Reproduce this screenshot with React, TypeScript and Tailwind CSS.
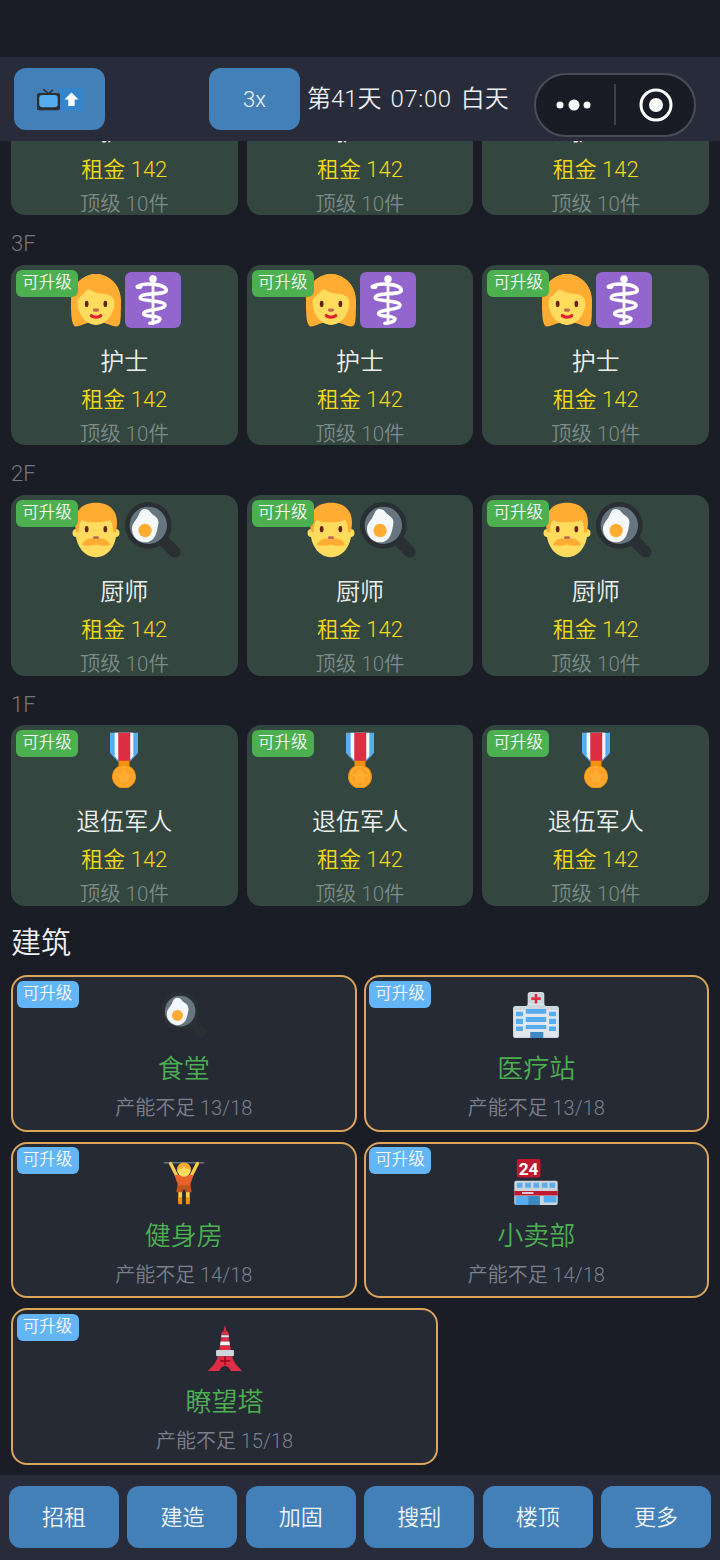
type IconProps = { className?: string };

const Woman = ({ className }: IconProps) => (
  <svg viewBox="0 0 36 36" className={className}>
    <path fill="#FFAC33" d="M18 1.300c6 0 16 4.700 16 17.700s0 16-3 16-7-3-13-3-9.915 3-13 3c-3.343 0-3-12-3-16C2 6 12 1.300 18 1.300z" />
    <path fill="#FFDC5D" d="M6 18.562c0-8.526 5.373-15.438 12-15.438s12 6.912 12 15.438S24.627 34 18 34 6 27.088 6 18.562z" />
    <path fill="#DF1F32" d="M18 30c-2.347 0-3.575-1.160-3.707-1.293-.391-.391-.391-1.023 0-1.414.387-.387 1.013-.39 1.404-.01.051.047.806.717 2.303.717 1.519 0 2.273-.69 2.305-.719.398-.373 1.027-.362 1.406.029.379.393.38 1.011-.006 1.397C21.575 28.840 20.347 30 18 30z" />
    <path fill="#FFAC33" d="M3.064 24c-.03-.325-.064-.647-.064-1 0-5 3 .562 3-3 0-3.563 2-4 4-6l3-3s5 3 9 3 8 2 8 6 3-2 3 3c0 .355-.033.673-.058 1h1.049C34 21.523 34 20.868 34 19 34 6 24 1.300 18 1.300S2 6 2 19c0 1.158-.028 2.986.012 5h1.052z" />
    <ellipse fill="#662113" cx="12" cy="20.500" rx="1.200" ry="2" />
    <ellipse fill="#662113" cx="24" cy="20.500" rx="1.200" ry="2" />
    <path fill="#C1694F" d="M19 25.500h-2c-.55 0-1-.45-1-1s.45-1 1-1h2c.55 0 1 .45 1 1s-.45 1-1 1z" />
  </svg>
);

const Man = ({ className }: IconProps) => (
  <svg viewBox="0 0 36 36" className={className}>
    <circle fill="#FFDC5D" cx="5.500" cy="20" r="2.600" />
    <circle fill="#FFDC5D" cx="30.500" cy="20" r="2.600" />
    <ellipse fill="#FFDC5D" cx="18" cy="20" rx="13" ry="15.500" />
    <path fill="#FFAC33" d="M18 .5C10 .5 4.500 5 4.500 13c0 3 .5 5 .8 6.500H7c0-3 .2-6 2-8 3 2 14 2 18 0 1.800 2 2 5 2 8h1.700c.3-1.500.8-3.500.8-6.500C31.500 5 26 .5 18 .5z" />
    <ellipse fill="#662113" cx="12" cy="17.500" rx="1.200" ry="2" />
    <ellipse fill="#662113" cx="24" cy="17.500" rx="1.200" ry="2" />
    <path fill="#C1694F" d="M19 24h-2c-.55 0-1-.45-1-1s.45-1 1-1h2c.55 0 1 .45 1 1s-.45 1-1 1z" />
    <path fill="#FFAC33" d="M18 24.500c-2-1.500-5-1.300-7 .3-1.300 1-2 2.200-2 2.700 2.500.8 6.500 1 9-.3 2.500 1.300 6.500 1.100 9 .3 0-.5-.7-1.700-2-2.700-2-1.600-5-1.800-7-.3z" />
  </svg>
);

const Caduceus = ({ className }: IconProps) => (
  <svg viewBox="0 0 36 36" className={className}>
    <rect width="36" height="36" rx="4" fill="#9266CC" />
    <path fill="none" stroke="#fff" strokeWidth="1.800" strokeLinecap="round" d="M18 6v27" />
    <circle cx="18" cy="4.500" r="2.400" fill="#fff" />
    <path
      fill="none"
      stroke="#fff"
      strokeWidth="2.300"
      strokeLinecap="round"
      d="M8 9.500C12 6.500 27 7.500 26.500 12 26 15 10 13 9.800 16.500 9.800 19 26 18 25.700 21.500 25.500 24.500 12 24 12 26.700 12 29 22 28 22.500 30 22.500 32 18 33 16 33"
    />
    <ellipse cx="9" cy="9.500" rx="2.200" ry="1.500" fill="#fff" />
  </svg>
);

const Pan = ({ className }: IconProps) => (
  <svg viewBox="0 0 36 36" className={className}>
    <path fill="none" stroke="#292F33" strokeWidth="7.500" strokeLinecap="round" d="M24 24l8 8" />
    <circle cx="15" cy="15" r="15" fill="#292F33" />
    <circle cx="15" cy="15" r="12" fill="#66757F" />
    <path fill="#F5F8FA" d="M12.500 4.500c3.500 0 3.500 2.500 6 4 2.500 1.500 3.500 3.500 2.800 6.500-.5 2.300-.6 4-1.800 6.500-1.300 3-4.500 5-8 4.300-3.800-.7-6.800-4-7-8-.1-3 1.300-4.800 3-7 1.500-2 2-6.300 5-6.300z" />
    <circle cx="12.900" cy="18.300" r="4.300" fill="#FFAC33" />
  </svg>
);

const Medal = ({ className }: IconProps) => (
  <svg viewBox="0 0 36 36" className={className}>
    <path fill="#55ACEE" d="M9 .5h18v13l-5 5.500h-8L9 13.500z" />
    <path fill="#F5F8FA" d="M12 .5h12v15l-3 3.500h-6l-3-3.500z" />
    <path fill="#DD2E44" d="M14.300 .5H22V19h-7.700z" />
    <path fill="#F4900C" d="M14.500 18.500h7v4h-7z" />
    <circle cx="18" cy="28.700" r="7.300" fill="#FFAC33" stroke="#F4900C" strokeWidth="0.800" />
    <circle cx="18" cy="28.700" r="5.800" fill="#F4900C" opacity="0.35" />
    <path fill="#FFAC33" d="M18 23.600l1.600 3.300 3.700.5-2.700 2.500.7 3.600-3.300-1.800-3.300 1.800.7-3.600-2.700-2.500 3.700-.5z" />
  </svg>
);

const Hospital = ({ className }: IconProps) => (
  <svg viewBox="0 0 36 36" className={className}>
    <path fill="#CCD6DD" d="M11.500 2a2 2 0 012-2h9a2 2 0 012 2v12h-13z" />
    <path fill="#E1E8ED" d="M11.500 9h13v5h-13z" />
    <path fill="#DD2E44" d="M17 1.500h2v2.700h2.700v2.100H19V9h-2V6.300h-2.700V4.200H17z" />
    <path fill="#CCD6DD" d="M0 13a2 2 0 012-2h8.500l1-1h13l1 1H34a2 2 0 012 2v21a2 2 0 01-2 2H2a2 2 0 01-2-2z" />
    <path fill="#E1E8ED" d="M1 14h34v21H1z" />
    <path fill="#55ACEE" d="M2.300 15.400h5.500V19H2.300zM28.200 15.400h5.500V19h-5.500zM2.300 21h5.500v4H2.300zM28.200 21h5.500v4h-5.500zM2.300 27h5.500v3.500H2.300zM28.200 27h5.500v3.500h-5.500zM10 13.300h16V17H10zM10 19.600h16v3.900H10zM10 25.900h16V29H10z" />
    <path fill="#3B88C3" d="M13.500 31.300h10.200V36H13.500z" />
  </svg>
);

const Lifter = ({ className }: IconProps) => (
  <svg viewBox="0 0 36 36" className={className}>
    <path fill="#66757F" d="M1 2.400h34v1.200H1z" />
    <path fill="#292F33" d="M1 1h1.500v4H1zM33.500 1H35v4h-1.500z" />
    <path fill="none" stroke="#FFCC4D" strokeWidth="2.600" strokeLinecap="round" d="M7.500 3.500l5 10M28.500 3.500l-5 10" />
    <path fill="none" stroke="#FFCC4D" strokeWidth="3" d="M15 24v9M21 24v9" />
    <path fill="#F4900C" d="M13.500 30h3v5.500h-3zM19.500 30h3v5.500h-3z" />
    <path fill="#E8612C" d="M10.500 12.500h15l-2.500 7v3H13v-3z" />
    <path fill="#C1541C" d="M12.800 20.500h10.400l.8 5.500h-4.500L18 23.500 16.500 26H12z" />
    <circle cx="18" cy="8.500" r="5.400" fill="#FFDC5D" />
    <path fill="#FFAC33" d="M12.600 8.500c0-3.800 2.700-5.600 5.400-5.600s5.400 1.800 5.400 5.600c-1.500 0-4.200-1-5.400-2.400-1 1.500-3.700 2.400-5.400 2.400z" />
  </svg>
);

const Store = ({ className }: IconProps) => (
  <svg viewBox="0 0 36 36" className={className}>
    <rect x="3" y="0" width="18.500" height="14.500" rx="1.500" fill="#BE1931" />
    <text x="12.200" y="12.300" textAnchor="middle" fontSize="13.500" fontWeight="700" fill="#fff" fontFamily="Roboto, sans-serif">24</text>
    <rect x="1" y="17" width="34" height="19" rx="1.500" fill="#CCD6DD" />
    <path fill="#5DADEC" d="M3 18.500h4.500v4H3zM9.500 18.500H14v4H9.500zM16 18.500h4.500v4H16zM22.500 18.500H27v4h-4.500zM28.500 18.500H33v4h-4.500z" />
    <path fill="#BE1931" d="M1 25h34v3.500H1z" />
    <path fill="#F5F8FA" d="M7 26h9v1.200H7z" />
    <path fill="#55ACEE" d="M2 29h19v7H2z" />
    <path fill="#3B88C3" d="M12 29h9v7h-9z" />
    <path fill="#55ACEE" d="M24 29h10v5H24z" />
  </svg>
);

const Tower = ({ className }: IconProps) => (
  <svg viewBox="0 0 36 36" className={className}>
    <path fill="#DD2E44" d="M18 0l1.200 5h-2.400z" />
    <path fill="#DD2E44" d="M15.500 5h5l.5 3h-6z" />
    <path fill="#E1E8ED" d="M15 8h6v1.800h-6z" />
    <path fill="#DD2E44" d="M15 9.800h6l.5 3.200h-7z" />
    <path fill="#F5F8FA" d="M14.500 13h7l.4 3h-7.800z" />
    <path fill="#DD2E44" d="M14 16h8l.5 4h-9z" />
    <rect x="11" y="19.500" width="14" height="5" rx="1" fill="#CCD6DD" />
    <path fill="#DD2E44" d="M12.500 24.500h11c1 3.500 3 7 7 10.500l1 1h-9c-1-2.500-2.500-4-4.500-4s-3.500 1.500-4.500 4h-9l1-1c4-3.500 6-7 7-10.500z" />
    <path fill="#A0041E" d="M14 27.500h8v1.200h-8z" />
    <path fill="#A0041E" d="M17.400 24.500h1.200v7h-1.200z" />
  </svg>
);

const Tv = ({ className }: IconProps) => (
  <svg viewBox="0 0 36 36" className={className}>
    <path fill="none" stroke="#292F33" strokeWidth="2.500" d="M18 9L10 2M18 9l7-6" />
    <rect x="0" y="8" width="36" height="27" rx="3" fill="#292F33" />
    <rect x="3.500" y="11" width="29" height="19" rx="5" fill="#55ACEE" />
  </svg>
);

const UpArrow = ({ className }: IconProps) => (
  <svg viewBox="0 0 36 36" className={className}>
    <rect width="36" height="36" fill="#3585cc" />
    <path fill="#fff" d="M18 7l11 11h-6v10H13V18H7z" />
  </svg>
);

type Kind = "nurse" | "chef" | "vet";

const floors: { label: string; name: string; kind: Kind }[] = [
  { label: "4F", name: "护士", kind: "nurse" },
  { label: "3F", name: "护士", kind: "nurse" },
  { label: "2F", name: "厨师", kind: "chef" },
  { label: "1F", name: "退伍军人", kind: "vet" },
];

function RoomIcons({ kind }: { kind: Kind }) {
  if (kind === "nurse") {
    return (
      <>
        <Woman className="size-[56px]" />
        <Caduceus className="ml-[1px] size-[56px]" />
      </>
    );
  }
  if (kind === "chef") {
    return (
      <>
        <Man className="size-[56px]" />
        <Pan className="ml-[1px] size-[56px]" />
      </>
    );
  }
  return <Medal className="size-[56px]" />;
}

function Room({ name, kind }: { name: string; kind: Kind }) {
  return (
    <div className="relative h-[180.4px] overflow-hidden rounded-[14px] bg-[#33463f] pt-[7px] text-center">
      <div className="absolute left-[5px] top-[5px] h-[27px] w-[62px] rounded-[6px] bg-[#4caf50] text-[16.5px] leading-[26px] text-[#f2f7f2]">
        可升级
      </div>
      <div className="flex h-[56px] justify-center">
        <RoomIcons kind={kind} />
      </div>
      <div className="mt-[14px] h-[40px] text-[24px] leading-[40px] text-[#eef0ee]">{name}</div>
      <div className="h-[36px] text-[22px] leading-[36px] text-[#f2d91a]">租金 142</div>
      <div className="h-[33px] text-[20.5px] leading-[32px] text-[#7d8c88]">顶级 10件</div>
    </div>
  );
}

const buildings = [
  { name: "食堂", status: "产能不足 13/18", Icon: Pan, wide: false },
  { name: "医疗站", status: "产能不足 13/18", Icon: Hospital, wide: false },
  { name: "健身房", status: "产能不足 14/18", Icon: Lifter, wide: false },
  { name: "小卖部", status: "产能不足 14/18", Icon: Store, wide: false },
  { name: "瞭望塔", status: "产能不足 15/18", Icon: Tower, wide: true },
];

const tabs = ["招租", "建造", "加固", "搜刮", "楼顶", "更多"];

export default function App() {
  return (
    <div className="flex h-[1560px] w-[720px] flex-col overflow-hidden bg-[#1a1d26] font-[350] [font-family:Roboto,'Noto_Sans_CJK_SC',sans-serif]">
      <div className="h-[57px] shrink-0 bg-[#1a1d26]" />

      {/* header */}
      <div className="relative z-10 flex h-[84px] shrink-0 items-center bg-[#282c3a] pl-[14px]">
        <button className="flex h-[62px] w-[91px] items-center justify-center rounded-[12px] bg-[#4480b8]">
          <Tv className="size-[23px]" />
          <UpArrow className="size-[23px]" />
        </button>
        <button className="ml-[104px] h-[62px] w-[91px] rounded-[12px] bg-[#4480b8] text-[22px] text-[#eef3f8]">3x</button>
        <span className="ml-[7px] text-[24px] text-[#eef0f4] [word-spacing:3px]">
          第41天 <span className="tracking-[0.6px]">07:00</span> 白天
        </span>

        {/* capsule */}
        <div className="absolute left-[534px] top-[16px] flex h-[64px] w-[162px] items-center rounded-full border-2 border-[#4a4d58] bg-[#1a1c25]">
          <svg viewBox="0 0 158 60" className="h-[60px] w-[158px]">
            <circle cx="24" cy="30" r="3.500" fill="#fff" />
            <circle cx="38" cy="30" r="5.500" fill="#fff" />
            <circle cx="51" cy="30" r="3.500" fill="#fff" />
            <path d="M79 9v41" stroke="#4a4d58" strokeWidth="1.500" />
            <circle cx="120" cy="30" r="15" fill="none" stroke="#fff" strokeWidth="3" />
            <circle cx="120" cy="30" r="7" fill="#fff" />
          </svg>
        </div>
      </div>

      {/* scrolled content */}
      <div className="min-h-0 flex-1 overflow-hidden">
        <div className="mt-[-155.7px] pl-[11px] pr-[11px]">
          {floors.map((floor) => (
            <div key={floor.label}>
              <div className="h-[49.7px] pt-[15px] text-[22px] leading-[28px] text-[#74777f]">{floor.label}</div>
              <div className="grid grid-cols-3 gap-x-[9px]">
                <Room name={floor.name} kind={floor.kind} />
                <Room name={floor.name} kind={floor.kind} />
                <Room name={floor.name} kind={floor.kind} />
              </div>
            </div>
          ))}

          <div className="h-[69.4px] pt-[12px] text-[30px] leading-[50px] text-[#eef0f2]">建筑</div>

          <div className="flex flex-wrap gap-x-[7px] gap-y-[10px]">
            {buildings.map(({ name, status, Icon, wide }) => (
              <div
                key={name}
                className={`relative h-[156.5px] rounded-[16px] border-2 border-[#dca55a] bg-[#252a35] text-center ${wide ? "w-[427px]" : "w-[345.5px]"}`}
              >
                <div className="absolute left-[3.5px] top-[3.5px] h-[27px] w-[62px] rounded-[6px] bg-[#64b5f6] text-[16.5px] leading-[26px] text-[#f4f9fd]">
                  可升级
                </div>
                <div className="flex justify-center pt-[15px]">
                  <Icon className="size-[46px]" />
                </div>
                <div className="mt-[11px] h-[40px] text-[26px] leading-[40px] text-[#4caf50]">{name}</div>
                <div className="h-[38px] text-[20px] leading-[38px] text-[#7c808a]">{status}</div>
              </div>
            ))}
          </div>
        </div>
      </div>

      {/* bottom bar */}
      <div className="flex h-[85px] shrink-0 items-start gap-[8.4px] bg-[#282c3a] pl-[9px] pr-[9px] pt-[11px]">
        {tabs.map((tab) => (
          <button key={tab} className="h-[62px] flex-1 rounded-[12px] bg-[#4480b8] text-[22px] text-[#eef3f8]">
            {tab}
          </button>
        ))}
      </div>
    </div>
  );
}
